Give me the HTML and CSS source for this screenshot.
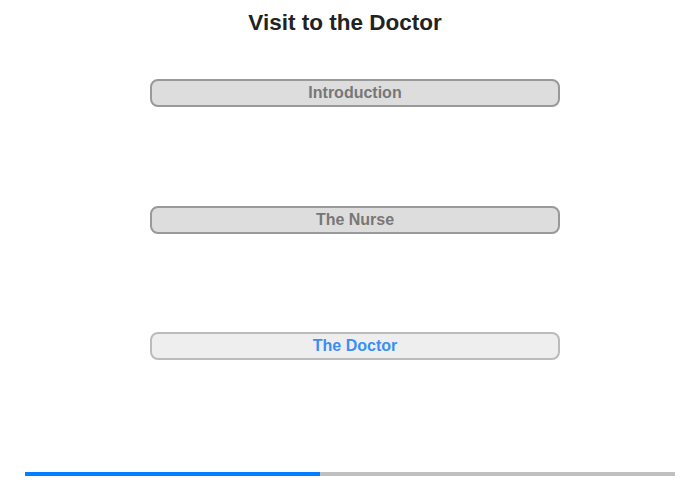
FILE: index.html
```html
<!DOCTYPE html>
<html lang="en">
<head>
    <meta charset="UTF-8">
    <title>Visit to the Doctor</title>
    <link rel="stylesheet" href="styles.css">
</head>
<body>
    <h1 class="title">Visit to the Doctor</h1>

    <div class="sections">
        <button class="section-button">Introduction</button>
        <button class="section-button">The Nurse</button>
        <button class="section-button current">The Doctor</button>
    </div>

    <div class="progress">
        <div class="progress-fill" style="width: 45.4%"></div>
    </div>
</body>
</html>
```

FILE: styles.css
```css
body {
    font-family: 'Liberation Sans', Arial, sans-serif;
    margin: 0;
    padding: 0;
    background: white;
    width: 700px;
    height: 480px;
}
.title {
    font-size: 22.5px;
    line-height: 26px;
    color: #222;
    text-align: center;
    margin: 0;
    padding: 10px 10px 0 0;
}
.sections {
    display: flex;
    flex-direction: column;
    align-items: flex-start;
    gap: 98.5px;
    margin-top: 43px;
    padding-left: 150px;
}
.section-button {
    width: 410px;
    height: 28px;
    box-sizing: border-box;
    background: #dddddd;
    border: 2px solid #999999;
    border-radius: 8px;
    color: #777777;
    font-family: 'Liberation Sans', Arial, sans-serif;
    font-size: 16px;
    font-weight: bold;
    padding: 0;
    cursor: pointer;
}
.section-button.current {
    background: #eeeeee;
    border-color: #bbbbbb;
    color: #3b8ef3;
}
.progress {
    margin: 112px 25px 0;
    height: 4px;
    background: #c0c0c0;
}
.progress-fill {
    height: 100%;
    background: #007fff;
}
```
